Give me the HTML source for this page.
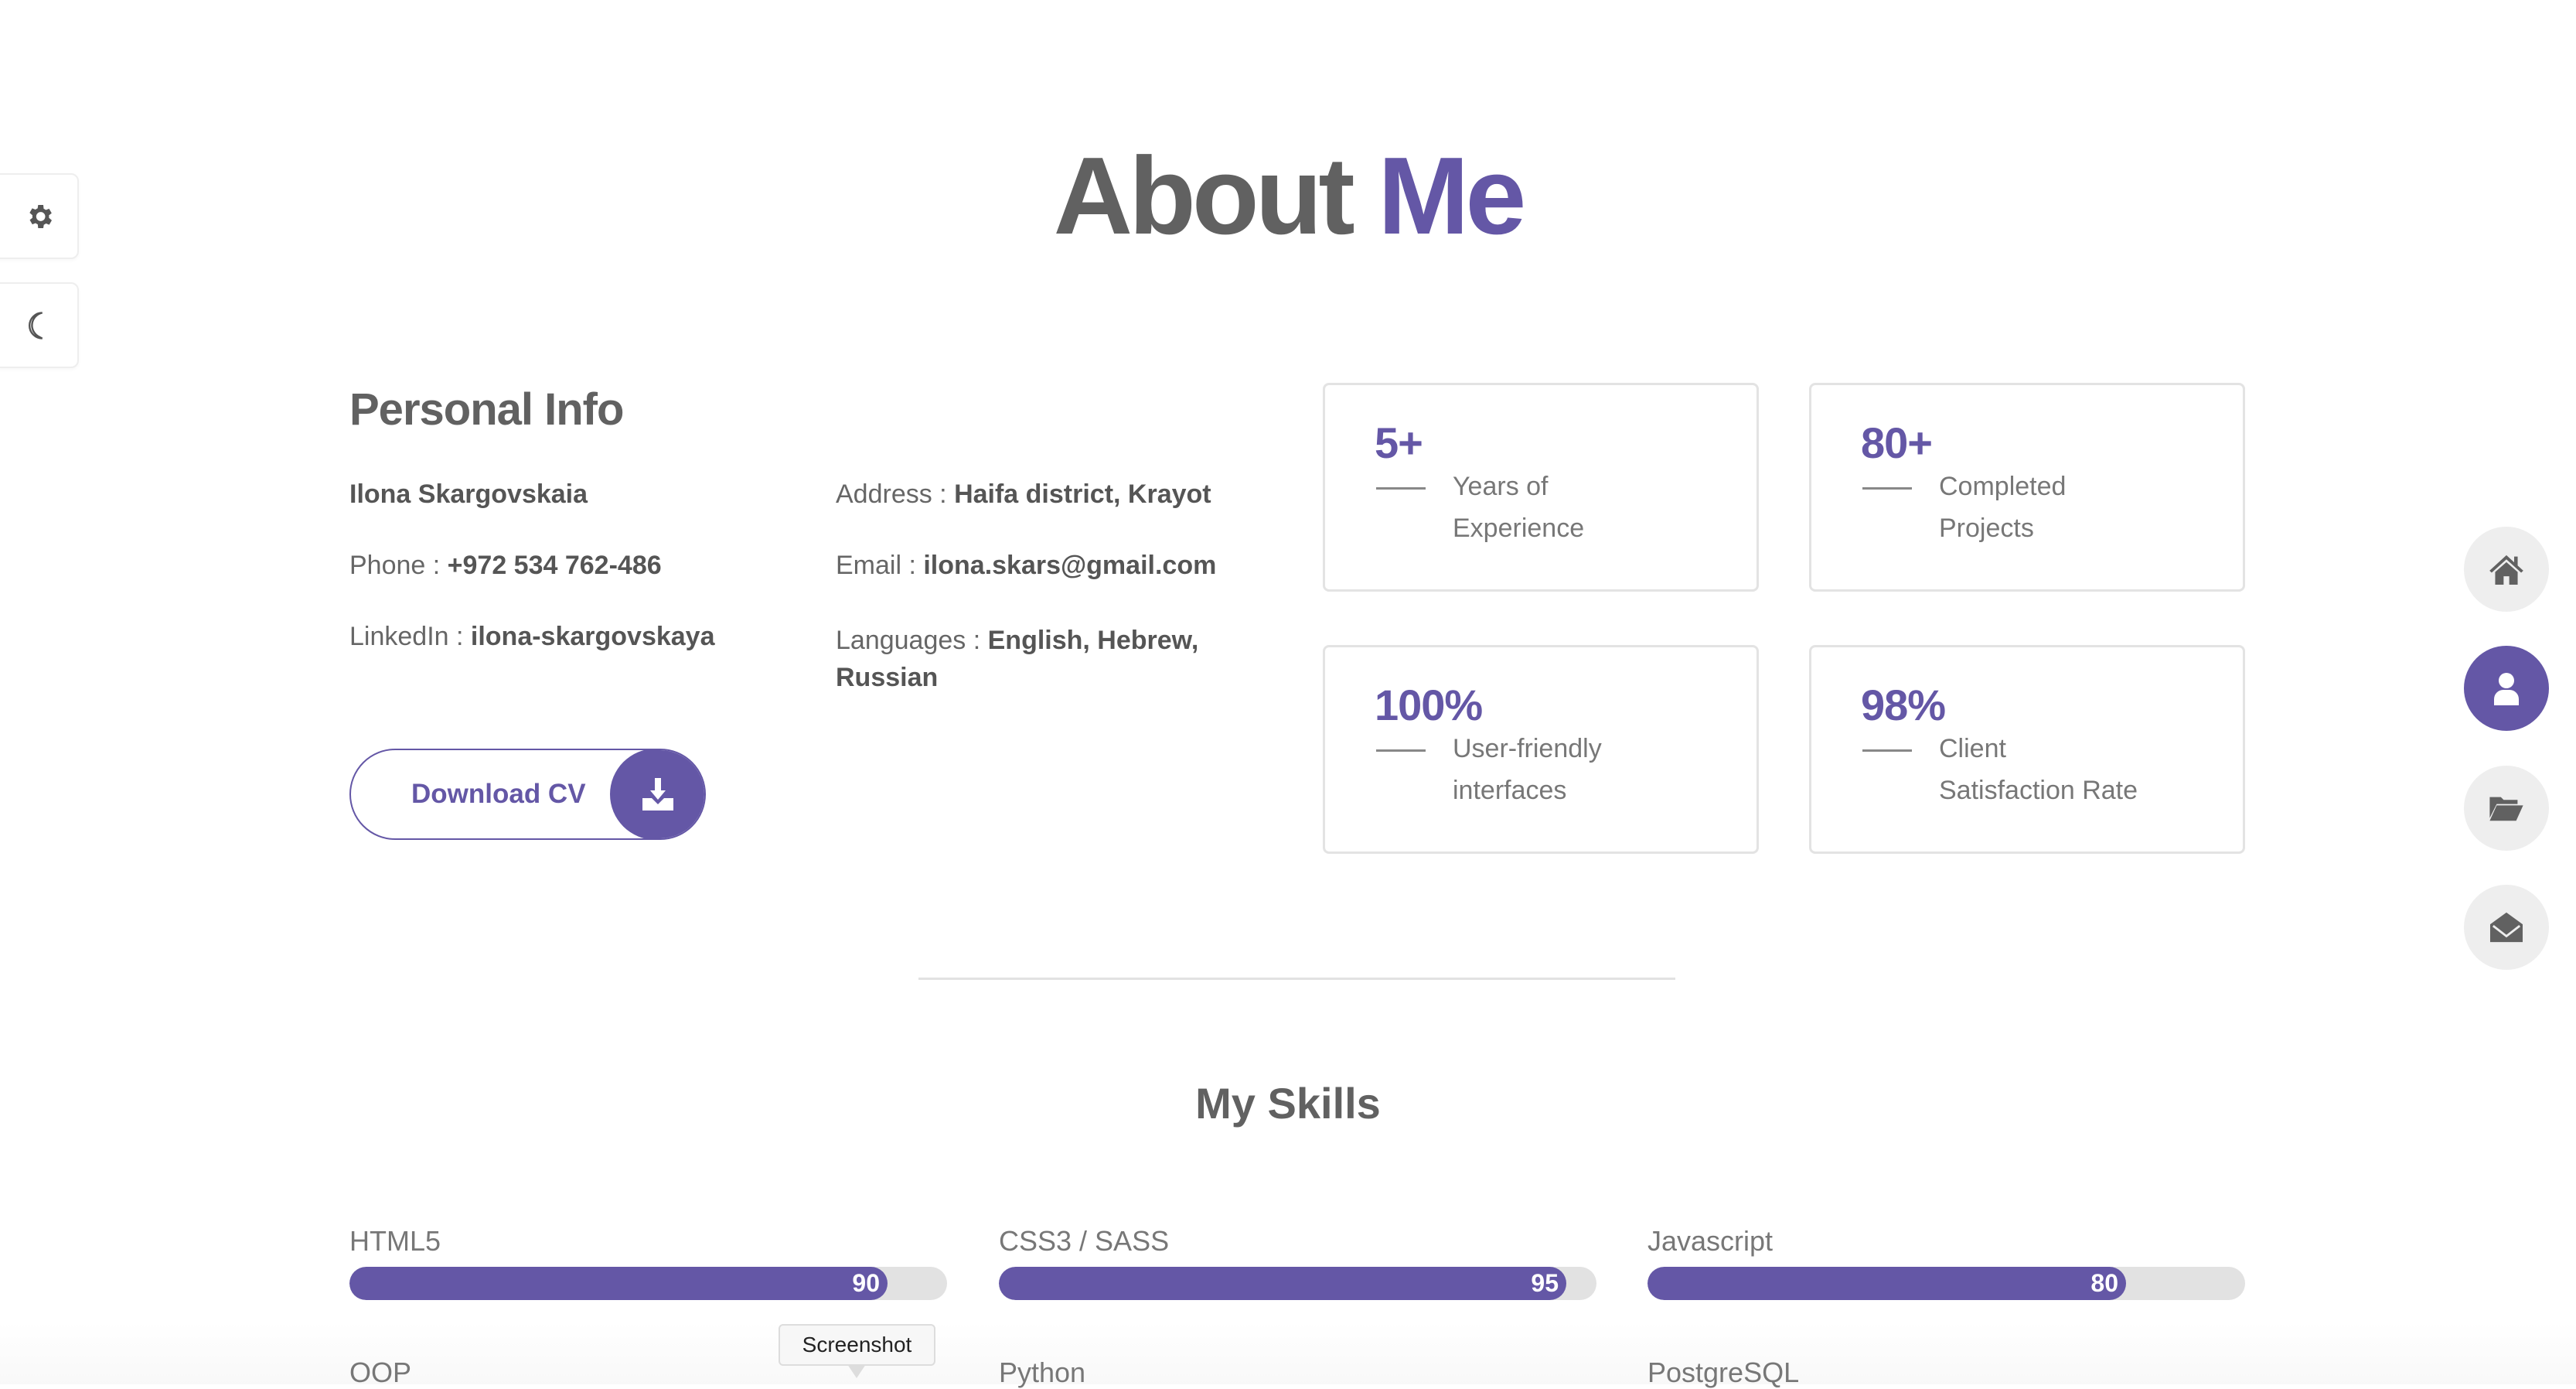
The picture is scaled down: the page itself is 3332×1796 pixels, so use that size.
<!DOCTYPE html>
<html><head><meta charset="utf-8"><style>
*{margin:0;padding:0;box-sizing:border-box}
html,body{width:3332px;height:1790px;overflow:hidden;background:#fff;font-family:"Liberation Sans",sans-serif;color:#666}
.a{position:absolute}
.side{left:-10px;width:112px;height:111px;border:2px solid #eee;border-radius:10px;background:#fff;display:flex;align-items:center;justify-content:center;padding-left:10px;box-shadow:0 2px 4px rgba(0,0,0,.03)}
.info{font-size:34px;color:#666;white-space:nowrap}
.info b{color:#555;font-weight:600}
.card{width:564px;height:270px;border:3px solid #e3e3e3;border-radius:8px;background:#fff}
.num{position:absolute;left:64px;top:42px;font-size:56px;font-weight:bold;color:#6457a6;letter-spacing:-1px}
.dash{position:absolute;left:66px;top:132px;width:64px;height:3px;background:#888}
.ct{position:absolute;left:165px;top:104px;font-size:34px;line-height:54px;color:#777}
.nav{left:3187px;width:110px;height:110px;border-radius:50%;background:#eee;display:flex;align-items:center;justify-content:center}
.lbl{font-size:36px;color:#777}
.bar{height:43px;border-radius:22px;background:#e2e2e2;overflow:hidden}
.fill{height:43px;border-radius:22px;background:#6457a6;color:#fff;font-size:32px;font-weight:bold;text-align:right;padding-right:10px;line-height:43px}
</style></head><body>

<div class="a side" style="top:224px"><svg width="40" height="40" viewBox="0 0 24 24"><path fill="#555" d="M19.4 13a7.5 7.5 0 000-2l2.1-1.6-2-3.5-2.5 1a7.4 7.4 0 00-1.7-1L15 3h-4l-.4 2.6a7.4 7.4 0 00-1.7 1l-2.5-1-2 3.5L6.6 11a7.5 7.5 0 000 2l-2.1 1.6 2 3.5 2.5-1a7.4 7.4 0 001.7 1L11 21h4l.4-2.6a7.4 7.4 0 001.7-1l2.5 1 2-3.5zM13 15.5a3.5 3.5 0 110-7 3.5 3.5 0 010 7z"/></svg></div>
<div class="a side" style="top:365px"><svg width="44" height="44" viewBox="0 0 24 24"><path fill="none" stroke="#555" stroke-width="1.3" d="M14 3a9 9 0 100 18 8 8 0 01-2-1A9 9 0 0114 3z"/></svg></div>

<div class="a" style="left:0;width:3332px;top:172px;text-align:center;font-size:142px;font-weight:bold;letter-spacing:-5px;color:#616161">About <span style="color:#6457a6">Me</span></div>

<div class="a" style="left:452px;top:496px;font-size:58px;font-weight:bold;color:#616161;letter-spacing:-1px">Personal Info</div>
<div class="a info" style="left:452px;top:620px"><b>Ilona Skargovskaia</b></div>
<div class="a info" style="left:452px;top:712px">Phone : <b>+972 534 762-486</b></div>
<div class="a info" style="left:452px;top:804px">LinkedIn : <b>ilona-skargovskaya</b></div>
<div class="a info" style="left:1081px;top:620px">Address : <b>Haifa district, Krayot</b></div>
<div class="a info" style="left:1081px;top:712px">Email : <b>ilona.skars@gmail.com</b></div>
<div class="a info" style="left:1081px;top:804px;line-height:48px">Languages : <b>English, Hebrew,</b><br><b>Russian</b></div>

<div class="a" style="left:452px;top:968px;width:461px;height:118px;border:2px solid #6457a6;border-radius:59px;overflow:hidden">
<div class="a" style="left:78px;top:0;line-height:114px;font-size:35px;font-weight:bold;color:#6457a6">Download CV</div>
<div class="a" style="right:-2px;top:-2px;width:124px;height:118px;border-radius:59px;background:#6457a6;display:flex;align-items:center;justify-content:center"><svg width="40" height="42" viewBox="0 0 20 21"><path fill="#fff" d="M8 0h4v8h3l-5 6-5-6h3zM0 13h6l4 4 4-4h6v8H0z"/></svg></div>
</div>

<div class="a card" style="left:1711px;top:495px"><div class="num">5+</div><div class="dash"></div><div class="ct">Years of<br>Experience</div></div>
<div class="a card" style="left:2340px;top:495px"><div class="num">80+</div><div class="dash"></div><div class="ct">Completed<br>Projects</div></div>
<div class="a card" style="left:1711px;top:834px"><div class="num">100%</div><div class="dash"></div><div class="ct">User-friendly<br>interfaces</div></div>
<div class="a card" style="left:2340px;top:834px"><div class="num">98%</div><div class="dash"></div><div class="ct">Client<br>Satisfaction Rate</div></div>

<div class="a nav" style="top:681px"><svg width="44" height="40" viewBox="0 0 24 22"><path fill="#616161" d="M12 1L0 12l1.5 1.5L12 4l10.5 9.5L24 12l-4-3.6V2h-2.5v4.1zM4 13v9h6v-6h4v6h6v-9l-8-7z"/></svg></div>
<div class="a nav" style="top:835px;background:#6457a6"><svg width="40" height="44" viewBox="0 0 20 22"><circle cx="10" cy="6" r="5" fill="#fff"/><path fill="#fff" d="M2 22v-4a6 6 0 016-6h4a6 6 0 016 6v4z"/></svg></div>
<div class="a nav" style="top:990px"><svg width="44" height="36" viewBox="0 0 24 20"><path fill="#616161" d="M0 2h8l2 2h10v3H5L0 17zM5 8h19l-5 11H0z"/></svg></div>
<div class="a nav" style="top:1144px"><svg width="42" height="42" viewBox="0 0 22 22"><path fill="#616161" d="M11 1l11 8v12H0V9z"/><path fill="none" stroke="#eee" stroke-width="1.5" d="M2 10l9 7 9-7"/></svg></div>

<div class="a" style="left:1188px;top:1264px;width:979px;height:3px;background:#e2e2e2"></div>
<div class="a" style="left:0;width:3332px;top:1394px;text-align:center;font-size:56px;font-weight:bold;color:#616161">My Skills</div>

<div class="a lbl" style="left:452px;top:1584px">HTML5</div>
<div class="a lbl" style="left:1292px;top:1584px">CSS3 / SASS</div>
<div class="a lbl" style="left:2131px;top:1584px">Javascript</div>
<div class="a bar" style="left:452px;top:1638px;width:773px"><div class="fill" style="width:696px">90</div></div>
<div class="a bar" style="left:1292px;top:1638px;width:773px"><div class="fill" style="width:734px">95</div></div>
<div class="a bar" style="left:2131px;top:1638px;width:773px"><div class="fill" style="width:619px">80</div></div>

<div class="a" style="left:0;top:1710px;width:3332px;height:80px;background:linear-gradient(rgba(248,248,248,0),rgba(244,244,244,.6))"></div>
<div class="a lbl" style="left:452px;top:1754px">OOP</div>
<div class="a lbl" style="left:1292px;top:1754px">Python</div>
<div class="a lbl" style="left:2131px;top:1754px">PostgreSQL</div>
<div class="a" style="left:1007px;top:1712px;width:203px;height:54px;background:#f7f7f7;border:2px solid #ddd;border-radius:6px;font-size:28px;color:#222;text-align:center;line-height:50px">Screenshot</div>
<div class="a" style="left:1096px;top:1764px;width:0;height:0;border-left:12px solid transparent;border-right:12px solid transparent;border-top:18px solid #ddd"></div>
</body></html>
